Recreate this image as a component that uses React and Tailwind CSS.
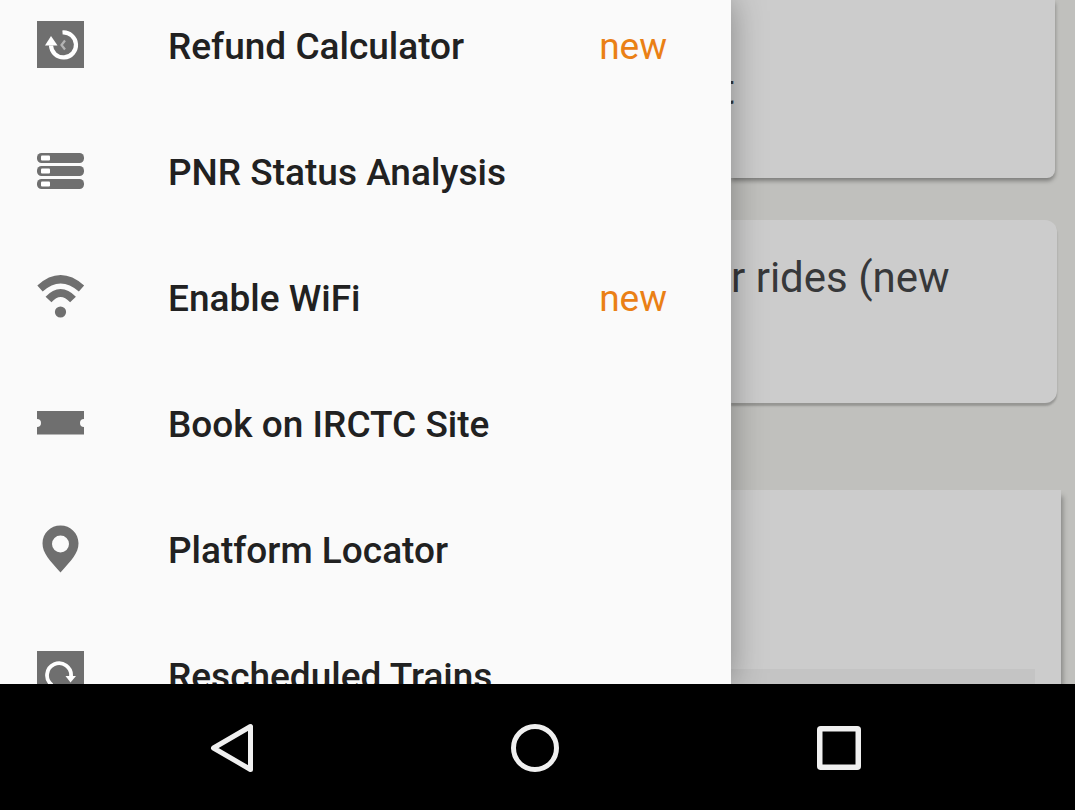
const Refund = () => (
  <svg viewBox="0 0 48 48" className="size-12" aria-hidden="true">
    <rect width="47" height="47" fill="#6f6f6f" />
    <path d="M25.5 11.500A12.500 12.500 0 1 1 14 24.500" fill="none" stroke="#fff" strokeWidth="4.200" />
    <path d="M8 24.500 14 15 20.500 24.500Z" fill="#fff" />
    <path d="M28 19.500 24.500 24 28 28.500" fill="none" stroke="#b4b4b4" strokeWidth="2.200" />
  </svg>
);

const Status = () => (
  <svg viewBox="0 0 48 48" className="size-12" aria-hidden="true">
    {[6, 19, 32].map((y) => (
      <g key={y}>
        <rect y={y} width="47" height="10" rx="4.5" fill="#6f6f6f" />
        <rect x="4" y={y + 2.5} width="9" height="5" rx="1" fill="#fff" />
      </g>
    ))}
  </svg>
);

const Wifi = () => (
  <svg viewBox="0 0 48 48" className="size-12" aria-hidden="true">
    <path d="M3 15.500Q23.500-3 44.500 15.500M11.500 26.500Q23.500 13.500 36 26.500" fill="none" stroke="#6f6f6f" strokeWidth="8" />
    <circle cx="23.500" cy="39" r="5.600" fill="#6f6f6f" />
  </svg>
);

const Ticket = () => (
  <svg viewBox="0 0 48 48" className="size-12" aria-hidden="true">
    <path d="M0 12H47V20A4 4 0 0 0 47 28V35.500H0V28A4 4 0 0 0 0 20Z" fill="#6f6f6f" />
  </svg>
);

const Pin = () => (
  <svg viewBox="0 0 48 48" className="size-12" aria-hidden="true">
    <path fillRule="evenodd" d="M23.500 0.500C13.500 0.500 5.500 8.300 5.500 18.300C5.500 28.500 13 35.500 23.500 47.500C34 35.500 41.500 28.500 41.500 18.300C41.500 8.300 33.500 0.500 23.500 0.500ZM23.500 10.500A8.500 8.500 0 1 1 23.500 27.500A8.500 8.500 0 1 1 23.500 10.500Z" fill="#6f6f6f" />
  </svg>
);

const Rescheduled = () => (
  <svg viewBox="0 0 48 48" className="size-12" aria-hidden="true">
    <rect width="47" height="47" fill="#6f6f6f" />
    <path d="M15 34A12 12 0 1 1 34 25.500" fill="none" stroke="#fff" strokeWidth="3.800" />
    <path d="M28.500 25H39L33.500 31.500Z" fill="#fff" />
  </svg>
);

const items = [
  { label: "Refund Calculator", Icon: Refund, isNew: true },
  { label: "PNR Status Analysis", Icon: Status },
  { label: "Enable WiFi", Icon: Wifi, isNew: true },
  { label: "Book on IRCTC Site", Icon: Ticket },
  { label: "Platform Locator", Icon: Pin },
  { label: "Rescheduled Trains", Icon: Rescheduled },
];

function Drawer() {
  return (
    <nav aria-label="Main menu" className="z-10 w-[68%] shrink-0 bg-[#fafafa] shadow-[0_0_32px_rgba(0,0,0,0.35)]">
      <ul className="-mt-[18px]">
        {items.map(({ label, Icon, isNew }) => (
          <li key={label}>
            <a href="#" className="flex h-[126px] items-center pr-16 pl-[37px] text-[37px] leading-10 text-[#212121]">
              <Icon />
              <span className="ml-[83px] flex-1 pt-1 font-medium whitespace-nowrap">{label}</span>
              {isNew && <span className="pt-1 text-[#ea8015]">new</span>}
            </a>
          </li>
        ))}
      </ul>
    </nav>
  );
}

function Content() {
  return (
    <main className="flex min-w-0 flex-1 flex-col bg-[#c0c0bd] text-[42px] leading-[48px] text-[#37383a]">
      <section className="mr-5 h-[178px] shrink-0 rounded-br-lg bg-[#cccccc] pt-[66px] shadow-[0_3px_4px_rgba(0,0,0,0.35)]">
        <p className="-ml-[10px]">t</p>
      </section>
      <section className="mt-[42px] mr-[18px] h-[183px] shrink-0 rounded-r-xl bg-[#cccccc] pt-[34px] shadow-[0_3px_2px_rgba(0,0,0,0.22)]">
        <p className="whitespace-nowrap">r rides (new</p>
      </section>
      <section className="mt-[87px] mr-[14px] flex flex-1 flex-col justify-end bg-[#cccccc] pr-[26px] shadow-[2px_6px_5px_rgba(0,0,0,0.3)]">
        <div className="h-[15px] bg-[#c4c4c4]" />
      </section>
    </main>
  );
}

function SystemBar() {
  return (
    <footer className="z-20 flex h-[126px] shrink-0 justify-center bg-black pr-1.5">
      <button type="button" aria-label="Back" className="flex w-[304px] items-center justify-center">
        <svg viewBox="0 0 52 52" className="size-[52px]" fill="none" stroke="#f0f0f0" strokeWidth="5">
          <path d="M8.500 27 45.500 5.500V48.500Z" strokeLinejoin="round" />
        </svg>
      </button>
      <button type="button" aria-label="Home" className="flex w-[304px] items-center justify-center">
        <svg viewBox="0 0 52 52" className="size-[52px]" fill="none" stroke="#f0f0f0" strokeWidth="5">
          <circle cx="26" cy="27" r="21.500" />
        </svg>
      </button>
      <button type="button" aria-label="Recent apps" className="flex w-[304px] items-center justify-center">
        <svg viewBox="0 0 52 52" className="size-[52px]" fill="none" stroke="#f0f0f0" strokeWidth="5.500">
          <rect x="6.750" y="7.750" width="38.500" height="38.500" rx="1" />
        </svg>
      </button>
    </footer>
  );
}

export default function App() {
  return (
    <div className="flex h-screen flex-col overflow-hidden font-[Roboto,sans-serif]">
      <div className="flex min-h-0 flex-1 overflow-hidden">
        <Drawer />
        <Content />
      </div>
      <SystemBar />
    </div>
  );
}
